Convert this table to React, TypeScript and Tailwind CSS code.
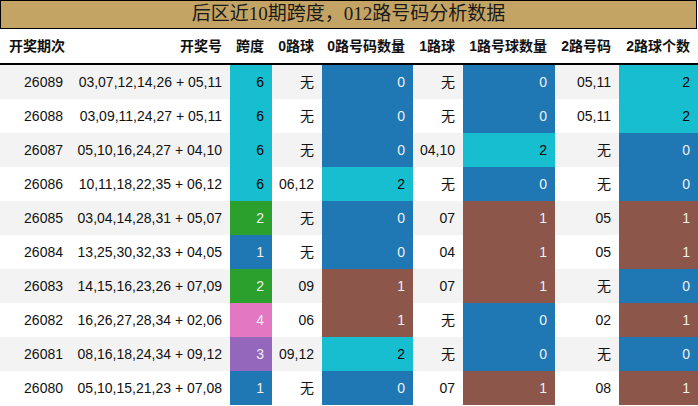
import React from "react";

type Row = {
    issue: string;
    nums: string;
    span: number;
    r0: string;
    c0: number;
    r1: string;
    c1: number;
    r2: string;
    c2: number;
};

const rows: Row[] = [
    { issue: "26089", nums: "03,07,12,14,26 + 05,11", span: 6, r0: "无", c0: 0, r1: "无", c1: 0, r2: "05,11", c2: 2 },
    { issue: "26088", nums: "03,09,11,24,27 + 05,11", span: 6, r0: "无", c0: 0, r1: "无", c1: 0, r2: "05,11", c2: 2 },
    { issue: "26087", nums: "05,10,16,24,27 + 04,10", span: 6, r0: "无", c0: 0, r1: "04,10", c1: 2, r2: "无", c2: 0 },
    { issue: "26086", nums: "10,11,18,22,35 + 06,12", span: 6, r0: "06,12", c0: 2, r1: "无", c1: 0, r2: "无", c2: 0 },
    { issue: "26085", nums: "03,04,14,28,31 + 05,07", span: 2, r0: "无", c0: 0, r1: "07", c1: 1, r2: "05", c2: 1 },
    { issue: "26084", nums: "13,25,30,32,33 + 04,05", span: 1, r0: "无", c0: 0, r1: "04", c1: 1, r2: "05", c2: 1 },
    { issue: "26083", nums: "14,15,16,23,26 + 07,09", span: 2, r0: "09", c0: 1, r1: "07", c1: 1, r2: "无", c2: 0 },
    { issue: "26082", nums: "16,26,27,28,34 + 02,06", span: 4, r0: "06", c0: 1, r1: "无", c1: 0, r2: "02", c2: 1 },
    { issue: "26081", nums: "08,16,18,24,34 + 09,12", span: 3, r0: "09,12", c0: 2, r1: "无", c1: 0, r2: "无", c2: 0 },
    { issue: "26080", nums: "05,10,15,21,23 + 07,08", span: 1, r0: "无", c0: 0, r1: "07", c1: 1, r2: "08", c2: 1 },
];

// colour per value, dark fills get light text
const spanColor: Record<number, string> = {
    1: "bg-[#1f77b4] text-[#f0f0f0]",
    2: "bg-[#2ca02c] text-[#f0f0f0]",
    3: "bg-[#9467bd] text-[#f0f0f0]",
    4: "bg-[#e377c2] text-[#f0f0f0]",
    6: "bg-[#17becf] text-black",
};

const countColor: Record<number, string> = {
    0: "bg-[#1f77b4] text-[#f0f0f0]",
    1: "bg-[#8c564b] text-[#f0f0f0]",
    2: "bg-[#17becf] text-black",
};

const grid =
    "grid grid-cols-[70px_160px_42px_50px_91px_50px_92px_64px_79px]";

const headers = [
    "开奖期次",
    "开奖号",
    "跨度",
    "0路球",
    "0路号码数量",
    "1路球",
    "1路号球数量",
    "2路号码",
    "2路球个数",
];

export default function App() {
    return (
        <div className="w-[698px] h-[406px] bg-white font-['Liberation_Sans','Noto_Sans_CJK_SC',sans-serif] text-[14px] text-[#111]">
            <div className="h-[29px] w-[697px] border border-black bg-[#c4a464] flex items-center justify-center font-['Liberation_Serif','Noto_Sans_CJK_SC',serif] text-[19px] text-[#1a1a1a]">
                后区近10期跨度，012路号码分析数据
            </div>
            <div
                className={`${grid} h-[36px] border-b-2 border-black font-bold items-center`}
            >
                {headers.map((h, i) => (
                    <div
                        key={h}
                        className={i === 0 ? "pl-[9px]" : "pr-2 text-right"}
                    >
                        {h}
                    </div>
                ))}
            </div>
            {rows.map((r, i) => (
                <div
                    key={r.issue}
                    className={`${grid} h-[34px] ${i % 2 === 0 ? "bg-[#f3f3f3]" : "bg-white"}`}
                >
                    <div className="flex items-center justify-end pr-[7px]">{r.issue}</div>
                    <div className="flex items-center justify-end pr-2">{r.nums}</div>
                    <div className={`flex items-center justify-end pr-2 ${spanColor[r.span]}`}>
                        {r.span}
                    </div>
                    <div className="flex items-center justify-end pr-2">{r.r0}</div>
                    <div className={`flex items-center justify-end pr-2 ${countColor[r.c0]}`}>
                        {r.c0}
                    </div>
                    <div className="flex items-center justify-end pr-2">{r.r1}</div>
                    <div className={`flex items-center justify-end pr-2 ${countColor[r.c1]}`}>
                        {r.c1}
                    </div>
                    <div className="flex items-center justify-end pr-2">{r.r2}</div>
                    <div className={`flex items-center justify-end pr-2 ${countColor[r.c2]}`}>
                        {r.c2}
                    </div>
                </div>
            ))}
        </div>
    );
}
